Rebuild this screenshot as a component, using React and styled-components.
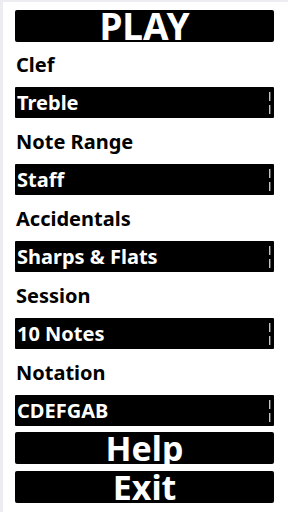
import React from 'react'
import styled, { createGlobalStyle } from 'styled-components'

const Global = createGlobalStyle`
  html, body { margin: 0; padding: 0; background: #fff; }
  body { font-family: 'Noto Sans', 'Open Sans', sans-serif; }
`

const Screen = styled.div`
  width: 288px;
  height: 512px;
  box-sizing: border-box;
  border-top: 2px solid #ececf1;
  border-left: 3px solid #ececf1;
  padding: 8px 14px 0 12px;
  display: flex;
  flex-direction: column;
`

const BigButton = styled.div`
  height: 32px;
  background: #000;
  color: #fff;
  border-radius: 2px;
  font-weight: 700;
  font-size: ${p => p.size || 32}px;
  line-height: 32px;
  text-align: center;
  margin-top: ${p => p.top || 0}px;
`

const Label = styled.div`
  color: #000;
  font-weight: 700;
  font-size: 20px;
  line-height: 24px;
  padding-left: 1px;
  margin-top: ${p => p.top || 0}px;
`

const Select = styled.div`
  height: 31px;
  background: #000;
  color: #fff;
  border-radius: 1px;
  display: flex;
  align-items: center;
  justify-content: space-between;
  padding: 0 3px 0 2px;
  font-weight: 700;
  font-size: 20px;
  line-height: 31px;
  margin-top: 10px;
`

const Arrows = () => (
  <svg width="3" height="26" viewBox="0 0 3 26">
    <rect x="1" y="2" width="1.4" height="9" fill="#c4c4c4" />
    <rect x="1" y="15" width="1.4" height="9" fill="#c4c4c4" />
  </svg>
)

const fields = [
  ['Clef', 'Treble'],
  ['Note Range', 'Staff'],
  ['Accidentals', 'Sharps & Flats'],
  ['Session', '10 Notes'],
  ['Notation', 'CDEFGAB'],
]

export default function App() {
  return (
    <>
      <Global />
      <Screen>
        <BigButton size={37}>PLAY</BigButton>
        {fields.map(([label, value], i) => (
          <React.Fragment key={label}>
            <Label top={i === 0 ? 11 : 12}>{label}</Label>
            <Select>
              <span>{value}</span>
              <Arrows />
            </Select>
          </React.Fragment>
        ))}
        <BigButton top={6} size={34}>Help</BigButton>
        <BigButton top={7} size={34}>Exit</BigButton>
      </Screen>
    </>
  )
}
